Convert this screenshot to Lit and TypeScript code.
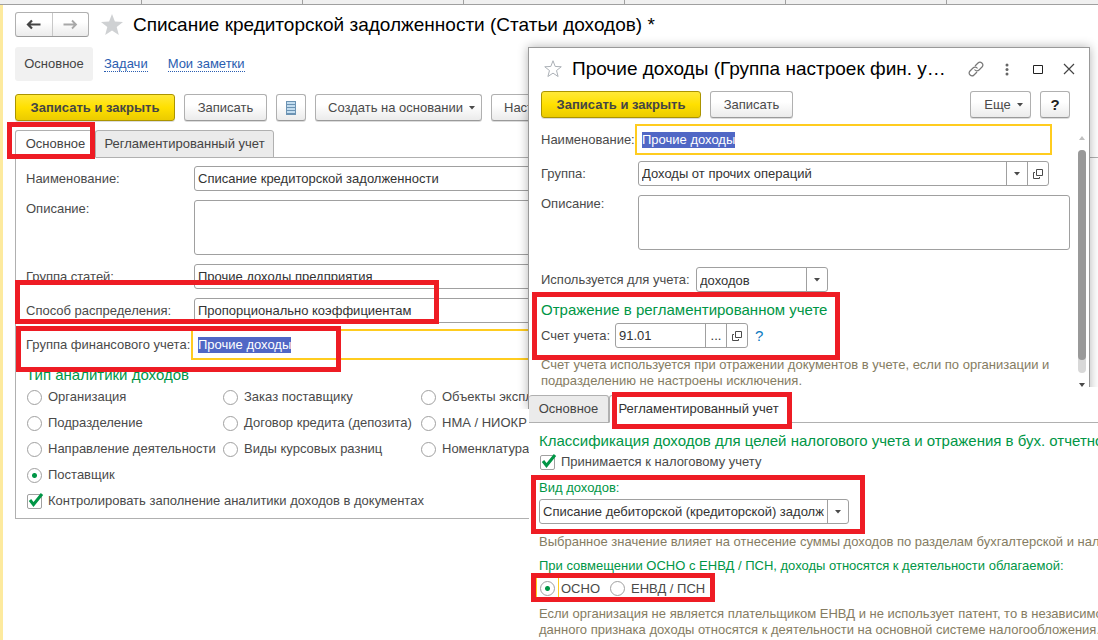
import { LitElement, html, css, svg } from "lit";
import { customElement } from "lit/decorators.js";
import { classMap } from "lit/directives/class-map.js";

const shared = css`
  :host {
    display: block;
    font-family: "Liberation Sans", Arial, sans-serif;
    font-size: 13px;
    line-height: 16px;
    color: #4a4a4a;
  }
  *,
  *::before,
  *::after {
    box-sizing: border-box;
  }
  button,
  input,
  select,
  textarea {
    font: inherit;
    color: inherit;
    margin: 0;
  }
  h1,
  h2,
  p {
    margin: 0;
    font-weight: normal;
  }
  svg {
    display: block;
    flex: none;
  }
  .title {
    font-size: 19px;
    line-height: 24px;
    color: #000;
    white-space: nowrap;
  }
  .heading {
    font-size: 15px;
    line-height: 18px;
    color: #009646;
    white-space: nowrap;
  }
  .toolbar {
    display: flex;
    gap: 9px;
  }
  .btn {
    display: flex;
    flex: none;
    align-items: center;
    justify-content: center;
    gap: 6px;
    height: 27px;
    padding: 0 12px;
    border: 1px solid #b0b0b0;
    border-bottom-color: #9a9a9a;
    border-radius: 3px;
    background: linear-gradient(#fff 40%, #ebebeb);
    box-shadow: 0 1px 0 #dcdcdc;
    white-space: nowrap;
  }
  .btn.primary {
    width: 160px;
    border-color: #ab9400;
    background: linear-gradient(#ffe838, #ffe000 50%, #ebcb00);
    font-weight: bold;
    color: #454545;
  }
  .btn.save {
    width: 83px;
  }
  .field {
    display: flex;
    height: 25px;
    min-width: 0;
    border: 1px solid #a0a0a0;
    border-radius: 3px;
    background: #fff;
    color: #333;
  }
  .field input,
  .field select {
    flex: 1;
    width: 0;
    min-width: 0;
    padding: 0 3px;
    border: 0;
    outline: 0;
    background: none;
    appearance: none;
  }
  .field button {
    display: flex;
    flex: none;
    align-items: center;
    justify-content: center;
    width: 21px;
    padding: 0;
    border: 0;
    border-left: 1px solid #a0a0a0;
    background: none;
  }
  .field.active {
    align-items: center;
    padding-left: 3px;
    border-color: transparent;
    border-radius: 0;
    outline: 2px solid #ffcc1f;
    outline-offset: 1px;
  }
  .field.active input {
    flex: none;
    width: auto;
    field-sizing: content;
    height: 16px;
    padding: 0;
    background: #5067c5;
    color: #fff;
  }
  textarea {
    display: block;
    height: 55px;
    border: 1px solid #a0a0a0;
    border-radius: 3px;
    background: #fff;
    resize: none;
    outline: 0;
  }
  .choice {
    display: flex;
    align-items: center;
    gap: 6px;
    white-space: nowrap;
  }
  .choice input {
    flex: none;
    width: 15px;
    height: 15px;
    appearance: none;
    border: 1px solid #a0a0a0;
    border-radius: 2px;
    background: #fff;
  }
  .choice input[type="radio"] {
    border-radius: 50%;
  }
  .choice input[type="radio"]:checked {
    background: radial-gradient(circle, #009646 2px, #fff 3px);
  }
  .check {
    display: grid;
  }
  .check > * {
    grid-area: 1 / 1;
  }
  .check svg {
    overflow: visible;
    pointer-events: none;
  }
  .hint {
    color: #857c62;
  }
`;

const caret = html`<svg width="6" height="4" viewBox="0 0 6 4" aria-hidden="true">
  <path d="M0 0H6L3 3.5Z" fill="#4a4a4a" />
</svg>`;

const openIcon = html`<svg width="10" height="10" viewBox="0 0 10 10" aria-hidden="true">
  <path d="M3.5.5h6v6h-6zM2 3.5H.5v6h6V8" fill="none" stroke="#4a4a4a" />
</svg>`;

const starPath = svg`<path d="M12 1l2.9 7.6 8.1.4-6.3 5.100 2.100 7.900L12 17.500 5.200 22l2.100-7.900L1 9l8.100-.4z" />`;

const checkbox = (label: string) => html`<label class="choice">
  <span class="check">
    <input type="checkbox" checked />
    <svg width="15" height="15" viewBox="0 0 15 15" aria-hidden="true">
      <path d="M3 6L6.500 10.500 15 0" fill="none" stroke="#009646" stroke-width="3" />
    </svg>
  </span>
  ${label}
</label>`;

@customElement("income-item-form")
class IncomeItemForm extends LitElement {
  static styles = [
    shared,
    css`
      :host {
        isolation: isolate;
        padding: 7px 0 0 12px;
      }
      .head {
        display: flex;
        align-items: center;
        height: 25px;
      }
      .history {
        display: flex;
        width: 74px;
        height: 25px;
        margin-right: 11px;
        border: 1px solid #b0b0b0;
        border-bottom-color: #9a9a9a;
        border-radius: 3px;
        background: linear-gradient(#fff 40%, #ebebeb);
      }
      .history button {
        display: flex;
        flex: 1;
        align-items: center;
        justify-content: center;
        padding: 0;
        border: 0;
        background: none;
      }
      .history button + button {
        border-left: 1px solid #c8c8c8;
      }
      .star {
        margin-right: 9px;
      }
      nav {
        display: flex;
        align-items: center;
        gap: 20px;
        height: 34px;
        margin: 10px 0 13px;
      }
      nav .here {
        width: 78px;
        margin-right: -9px;
        border-radius: 3px;
        background: #f1f1f1;
        line-height: 34px;
        text-align: center;
        color: #444;
      }
      nav a {
        border-bottom: 1px dotted #2a5db0;
        line-height: 15px;
        color: #2a5db0;
        text-decoration: none;
      }
      .list {
        width: 30px;
        padding: 0;
      }
      .create {
        width: 167px;
        padding: 0 6px 0 12px;
      }
      .tabs {
        display: flex;
        height: 28px;
        margin-top: 9px;
      }
      .tab {
        padding: 0;
        border: 1px solid #b0b0b0;
        border-radius: 3px 3px 0 0;
        background: #ebebeb;
        color: #444;
      }
      .tab.main {
        z-index: 1;
        width: 81px;
        border-bottom-color: #fff;
        background: #fff;
      }
      .tab.ledger {
        width: 179px;
        margin-left: -1px;
      }
      .panel {
        margin-top: -1px;
        padding: 8px 0 4px 10px;
        border: 1px solid #b0b0b0;
        border-right: 0;
      }
      .rows {
        display: grid;
        grid-template-columns: 168px 1fr;
        row-gap: 9px;
        padding-right: 20px;
        line-height: 25px;
      }
      .rows .top {
        line-height: 18px;
      }
      .heading {
        margin-top: 9px;
      }
      .kinds {
        display: grid;
        grid-template-columns: 196px 198px 1fr;
        grid-auto-rows: 26px;
        padding-left: 1px;
      }
      .kinds .wide {
        grid-column: 1 / -1;
      }
      .kinds .first {
        grid-column: 1;
      }
    `,
  ];

  private kinds = [
    "Организация",
    "Заказ поставщику",
    "Объекты эксплуатации",
    "Подразделение",
    "Договор кредита (депозита)",
    "НМА / НИОКР",
    "Направление деятельности",
    "Виды курсовых разниц",
    "Номенклатура",
    "Поставщик",
  ];

  render() {
    return html`
      <div class="head">
        <div class="history">
          <button aria-label="Назад">
            <svg width="15" height="11" viewBox="0 0 15 11">
              <path d="M14.500 5.500H3M6 1.500L2 5.500 6 9.500" fill="none" stroke="#444" stroke-width="2.200" />
            </svg>
          </button>
          <button aria-label="Вперед">
            <svg width="15" height="11" viewBox="0 0 15 11">
              <path d="M.5 5.500H13M9 1.500L13 5.500 9 9.500" fill="none" stroke="#a8a8a8" stroke-width="1.800" />
            </svg>
          </button>
        </div>
        <svg class="star" width="24" height="24" viewBox="0 0 24 24" fill="#cfd1d3">${starPath}</svg>
        <h1 class="title">Списание кредиторской задолженности (Статьи доходов) *</h1>
      </div>
      <nav>
        <span class="here">Основное</span>
        <a href="#tasks">Задачи</a>
        <a href="#notes">Мои заметки</a>
      </nav>
      <div class="toolbar">
        <button class="btn primary">Записать и закрыть</button>
        <button class="btn save">Записать</button>
        <button class="btn list" aria-label="Список">
          <svg width="10" height="14" viewBox="0 0 10 14">
            <path d="M0 0h10v14H0z" fill="#6c93b3" />
            <path d="M1 2h8M1 5h8M1 8h8M1 11h8" stroke="#c2dcef" stroke-width="2" />
          </svg>
        </button>
        <button class="btn create">Создать на основании ${caret}</button>
        <button class="btn">Настройки</button>
      </div>
      <div class="tabs">
        <button class="tab main">Основное</button>
        <button class="tab ledger">Регламентированный учет</button>
      </div>
      <div class="panel">
        <div class="rows">
          <label for="name">Наименование:</label>
          <div class="field"><input id="name" value="Списание кредиторской задолженности" /></div>
          <label class="top" for="about">Описание:</label>
          <textarea id="about"></textarea>
          <label for="group">Группа статей:</label>
          <div class="field"><input id="group" value="Прочие доходы предприятия" /></div>
          <label for="method">Способ распределения:</label>
          <div class="field"><input id="method" value="Пропорционально коэффициентам" /></div>
          <label for="finance">Группа финансового учета:</label>
          <div class="field active"><input id="finance" value="Прочие доходы" /></div>
        </div>
        <h2 class="heading">Тип аналитики доходов</h2>
        <div class="kinds">
          ${this.kinds.map(
            (kind) => html`<label class=${classMap({ choice: true, first: kind === "Поставщик" })}>
              <input type="radio" name="kind" ?checked=${kind === "Поставщик"} />${kind}
            </label>`
          )}
          <div class="choice wide">${checkbox("Контролировать заполнение аналитики доходов в документах")}</div>
        </div>
      </div>
    `;
  }
}

@customElement("finance-group-dialog")
class FinanceGroupDialog extends LitElement {
  static styles = [
    shared,
    css`
      :host {
        box-sizing: border-box;
        border: 1px solid #999;
        background: #fff;
        box-shadow: 0 0 10px rgba(0, 0, 0, 0.3);
      }
      .bar {
        display: flex;
        align-items: center;
        gap: 15px;
        height: 41px;
        padding: 0 12px 0 15px;
      }
      .bar .title {
        flex: 1;
        margin-left: -5px;
      }
      .bar button {
        width: 16px;
        height: 16px;
        padding: 0;
        border: 0;
        background: none;
      }
      .body {
        display: flex;
        flex-direction: column;
        gap: 9px;
        padding: 2px 19px 0 12px;
      }
      .spacer {
        flex: 1;
      }
      .more {
        width: 61px;
        padding: 0 5px 0 11px;
      }
      .help {
        width: 30px;
        padding: 0;
        font-size: 15px;
        font-weight: bold;
        color: #222;
      }
      .rows {
        display: grid;
        grid-template-columns: 97px 1fr;
        row-gap: 9px;
        line-height: 25px;
      }
      .rows .field {
        margin-right: 21px;
      }
      .rows .top {
        line-height: 18px;
      }
      .line {
        display: flex;
        line-height: 25px;
      }
      .purpose {
        margin-top: 8px;
      }
      .purpose label {
        width: 155px;
      }
      .purpose .field {
        width: 132px;
      }
      .account {
        margin-top: -5px;
      }
      .account label {
        width: 74px;
      }
      .account .field {
        width: 133px;
      }
      .account a {
        margin-left: 7px;
        font-size: 15px;
        color: #0b7ac1;
        text-decoration: none;
      }
      .scroll {
        position: absolute;
        top: 88px;
        right: 3px;
        display: flex;
        flex-direction: column;
        align-items: center;
        gap: 10px;
        width: 8px;
      }
      .track {
        width: 8px;
        height: 223px;
        border-radius: 4px;
        background: #d8d8d8;
      }
      .thumb {
        height: 210px;
        border-radius: 4px;
        background: #999;
      }
    `,
  ];

  render() {
    return html`
      <div class="bar">
        <svg width="18" height="18" viewBox="0 0 24 24" fill="none" stroke="#a9aeb4" stroke-width="1.300">${starPath}</svg>
        <h2 class="title">Прочие доходы (Группа настроек фин. у…</h2>
        <button aria-label="Ссылка">
          <svg width="16" height="16" viewBox="0 0 16 16" fill="none" stroke="#777" stroke-width="1.200">
            <path d="M7 5L10 2C12.500-.5 16.500 3 14 6L11 9C9.500 10.500 7.500 10 6.500 8.500" />
            <path d="M9 11L6 14C3.500 16.500-.5 13 2 10L5 7C6.500 5.500 8.500 6 9.500 7.500" />
          </svg>
        </button>
        <button aria-label="Меню">
          <svg width="16" height="16" viewBox="0 0 16 16" fill="#666">
            <circle cx="8" cy="4" r="1.500" /><circle cx="8" cy="8.500" r="1.500" /><circle cx="8" cy="13" r="1.500" />
          </svg>
        </button>
        <button aria-label="Развернуть">
          <svg width="16" height="16" viewBox="0 0 16 16">
            <path d="M3.500 4.500h9v8h-9z" fill="none" stroke="#222" />
          </svg>
        </button>
        <button aria-label="Закрыть">
          <svg width="16" height="16" viewBox="0 0 16 16">
            <path d="M3 3l10 10M13 3L3 13" stroke="#444" stroke-width="1.200" />
          </svg>
        </button>
      </div>
      <div class="body">
        <div class="toolbar">
          <button class="btn primary">Записать и закрыть</button>
          <button class="btn save">Записать</button>
          <span class="spacer"></span>
          <button class="btn more">Еще ${caret}</button>
          <button class="btn help">?</button>
        </div>
        <div class="rows">
          <label for="name">Наименование:</label>
          <div class="field active"><input id="name" value="Прочие доходы" /></div>
          <label for="group">Группа:</label>
          <div class="field">
            <input id="group" value="Доходы от прочих операций" />
            <button aria-label="Выбрать">${caret}</button>
            <button aria-label="Открыть">${openIcon}</button>
          </div>
          <label class="top" for="about">Описание:</label>
          <textarea id="about"></textarea>
        </div>
        <div class="line purpose">
          <label for="purpose">Используется для учета:</label>
          <div class="field">
            <select id="purpose"><option>доходов</option></select>
            <button tabindex="-1" aria-label="Выбрать">${caret}</button>
          </div>
        </div>
        <h2 class="heading">Отражение в регламентированном учете</h2>
        <div class="line account">
          <label for="account">Счет учета:</label>
          <div class="field">
            <input id="account" value="91.01" />
            <button aria-label="Подобрать">...</button>
            <button aria-label="Открыть">${openIcon}</button>
          </div>
          <a href="#help">?</a>
        </div>
        <p class="hint">
          Счет учета используется при отражении документов в учете, если по организации и подразделению не настроены
          исключения.
        </p>
      </div>
      <div class="scroll" aria-hidden="true">
        <svg width="6" height="4" viewBox="0 0 6 4"><path d="M0 4H6L3 0Z" fill="#c0c0c0" /></svg>
        <div class="track"><div class="thumb"></div></div>
        <svg width="6" height="4" viewBox="0 0 6 4"><path d="M0 0H6L3 4Z" fill="#4a4a4a" /></svg>
      </div>
    `;
  }
}

@customElement("tax-settings")
class TaxSettings extends LitElement {
  static styles = [
    shared,
    css`
      :host {
        padding-top: 8px;
        background: #fff;
        overflow: hidden;
      }
      .tabs {
        display: flex;
        height: 28px;
        border-bottom: 1px solid #b0b0b0;
      }
      .tab {
        height: 28px;
        padding: 0;
        border: 1px solid #b0b0b0;
        border-radius: 3px 3px 0 0;
        background: #ebebeb;
        color: #444;
      }
      .tab.main {
        width: 80px;
        border-left: 0;
      }
      .tab.ledger {
        width: 179px;
        border-bottom-color: #fff;
        background: #fff;
        color: #333;
      }
      .body {
        padding: 9px 0 0 10px;
        white-space: nowrap;
      }
      .taxable {
        display: flex;
        height: 24px;
        padding-left: 1px;
      }
      .green {
        display: block;
        line-height: 18px;
        color: #009646;
      }
      label.green {
        margin-top: 5px;
      }
      p.green {
        margin: 7px 0 2px;
      }
      .field {
        width: 310px;
        margin: 2px 0 10px;
      }
      .modes {
        display: flex;
        gap: 10px;
        margin: 0 0 6px 1px;
      }
      .modes .choice {
        height: 23px;
      }
      .modes .current {
        margin-left: -4px;
        padding-left: 4px;
        background: linear-gradient(
            to right,
            #ffcc1f 1px,
            transparent 1px 22px,
            #ffcc1f 22px 23px,
            transparent 23px
          );
      }
    `,
  ];

  render() {
    return html`
      <div class="tabs">
        <button class="tab main">Основное</button>
        <button class="tab ledger">Регламентированный учет</button>
      </div>
      <div class="body">
        <h2 class="heading">Классификация доходов для целей налогового учета и отражения в бух. отчетности</h2>
        <div class="taxable">${checkbox("Принимается к налоговому учету")}</div>
        <label class="green" for="income">Вид доходов:</label>
        <div class="field">
          <select id="income"><option>Списание дебиторской (кредиторской) задолженности</option></select>
          <button tabindex="-1" aria-label="Выбрать">${caret}</button>
        </div>
        <p class="hint">Выбранное значение влияет на отнесение суммы доходов по разделам бухгалтерской и налоговой отчетности.</p>
        <p class="green">При совмещении ОСНО с ЕНВД / ПСН, доходы относятся к деятельности облагаемой:</p>
        <div class="modes">
          <label class="choice current"><input type="radio" name="mode" checked />ОСНО</label>
          <label class="choice"><input type="radio" name="mode" />ЕНВД / ПСН</label>
        </div>
        <p class="hint">
          Если организация не является плательщиком ЕНВД и не использует патент, то в независимости от<br />
          данного признака доходы относятся к деятельности на основной системе налогообложения.
        </p>
      </div>
    `;
  }
}

@customElement("app-root")
class AppRoot extends LitElement {
  static styles = css`
    :host {
      position: relative;
      display: block;
      min-height: 100vh;
      overflow: hidden;
      background: #fff;
    }
    .strip {
      display: flex;
      height: 4px;
      padding-left: 141px;
      border-bottom: 1px solid #a0a0a0;
      background: #f0f0f0;
    }
    .strip i {
      box-sizing: border-box;
      flex: none;
      width: 161px;
      border-left: 1px solid #a0a0a0;
    }
    .page {
      display: block;
      box-sizing: border-box;
      min-height: calc(100vh - 4px);
      border-left: 3px solid #d9c878;
      border-image: linear-gradient(to right, #fdea9e 67%, #cdbb72 67%) 3;
    }
    finance-group-dialog {
      position: absolute;
      top: 47px;
      left: 528px;
      width: 562px;
      height: 362px;
      clip-path: inset(-12px -8px 0 -12px);
    }
    tax-settings {
      position: absolute;
      top: 387px;
      right: 0;
      bottom: 0;
      left: 529px;
    }
    .mark {
      position: absolute;
      box-sizing: border-box;
      border: 5px solid #ee1c24;
      pointer-events: none;
    }
    .m1 { left: 7px; top: 122px; width: 88px; height: 37px; }
    .m2 { left: 15px; top: 280px; width: 424px; height: 44px; }
    .m3 { left: 16px; top: 326px; width: 325px; height: 46px; }
    .m4 { left: 532px; top: 292px; width: 308px; height: 68px; }
    .m5 { left: 612px; top: 392px; width: 180px; height: 37px; }
    .m6 { left: 531px; top: 475px; width: 334px; height: 59px; }
    .m7 { left: 531px; top: 573px; width: 184px; height: 29px; }
  `;

  render() {
    return html`
      <div class="strip"><i></i><i></i><i></i><i></i><i></i><i></i></div>
      <div class="page"><income-item-form></income-item-form></div>
      <finance-group-dialog></finance-group-dialog>
      <tax-settings></tax-settings>
      ${[1, 2, 3, 4, 5, 6, 7].map((n) => html`<div class=${classMap({ mark: true, ["m" + n]: true })}></div>`)}
    `;
  }
}
